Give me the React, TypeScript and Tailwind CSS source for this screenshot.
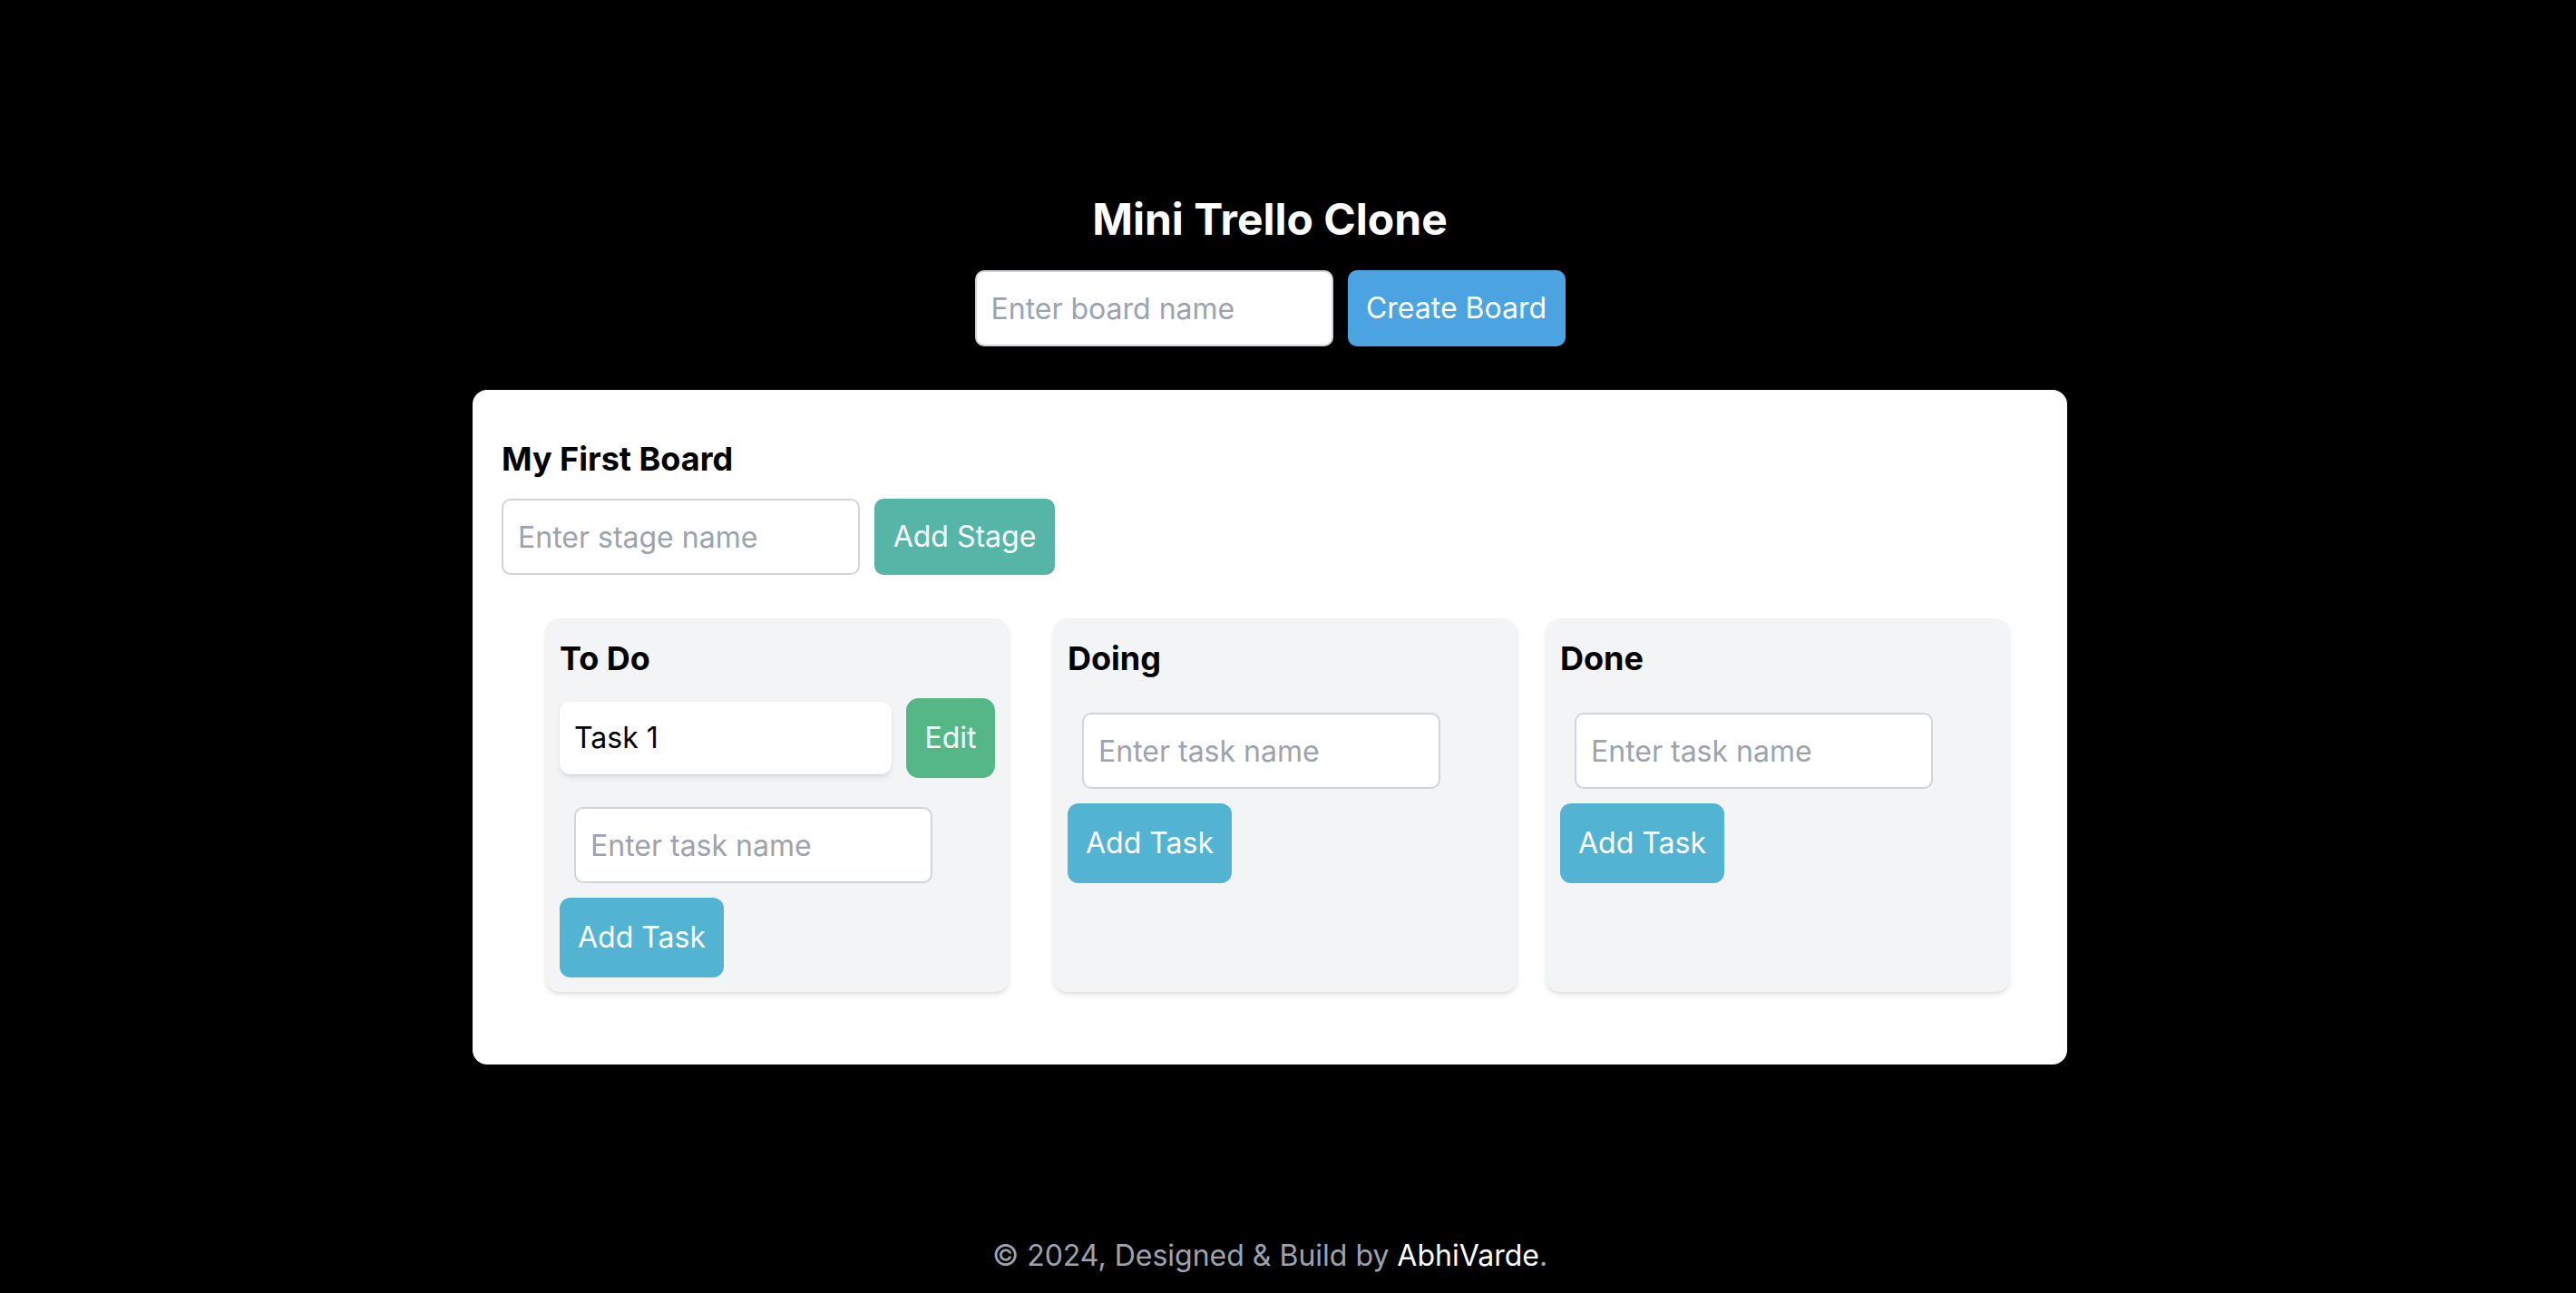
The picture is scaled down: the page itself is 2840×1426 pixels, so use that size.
import React from "react";

type Task = { id: number; name: string };
type Stage = { id: number; title: string; tasks: Task[]; gap: string };

const stages: Stage[] = [
  { id: 1, title: "To Do", tasks: [{ id: 1, name: "Task 1" }], gap: "mr-[48px]" },
  { id: 2, title: "Doing", tasks: [], gap: "mr-[31px]" },
  { id: 3, title: "Done", tasks: [], gap: "" },
];

function StageColumn({ stage }: { stage: Stage }) {
  return (
    <div className={`w-[512px] shrink-0 bg-[#f3f4f6] rounded-[16px] p-[16px] shadow-md flex flex-col items-start ${stage.gap}`}>
      <h3 className="text-[36px] leading-[56px] font-bold text-black mb-[16px]">{stage.title}</h3>
      {stage.tasks.map((task) => (
        <div key={task.id} className="w-full flex items-center gap-[16px] mb-[16px]">
          <div className="flex-1 bg-white rounded-[12px] shadow-md p-[16px] text-[32px] leading-[48px] text-black">
            {task.name}
          </div>
          <button className="w-[98px] h-[88px] bg-[#56b786] text-white text-[32px] rounded-[14px]">Edit</button>
        </div>
      ))}
      <input
        placeholder="Enter task name"
        className="m-[16px] w-[395px] h-[84px] px-[16px] text-[32px] bg-white border-2 border-[#d1d5db] rounded-[10px] placeholder:text-[#9ca3af] outline-none"
      />
      <button className="w-[181px] h-[88px] bg-[#53b3d3] text-white text-[32px] rounded-[12px]">Add Task</button>
    </div>
  );
}

export default function App() {
  return (
    <div className="min-h-screen bg-black flex flex-col font-['Inter',sans-serif]">
      <main className="w-[2800px] flex flex-col items-center pt-[210px]">
        <h1 className="text-[48px] leading-[64px] font-bold text-white">Mini Trello Clone</h1>
        <div className="flex mt-[24px] gap-[16px]">
          <input
            placeholder="Enter board name"
            className="w-[395px] h-[84px] px-[16px] text-[32px] bg-white border-2 border-[#d1d5db] rounded-[10px] placeholder:text-[#9ca3af] outline-none"
          />
          <button className="w-[240px] h-[84px] bg-[#4ba3e2] text-white text-[32px] rounded-[10px]">Create Board</button>
        </div>

        <div className="mt-[48px] w-[1758px] bg-white rounded-[16px] pt-[48px] px-[32px] pb-[32px]">
          <h2 className="text-[36px] leading-[56px] font-bold text-black mb-[16px]">My First Board</h2>
          <div className="flex gap-[16px]">
            <input
              placeholder="Enter stage name"
              className="w-[395px] h-[84px] px-[16px] text-[32px] bg-white border-2 border-[#d1d5db] rounded-[10px] placeholder:text-[#9ca3af] outline-none"
            />
            <button className="w-[199px] h-[84px] bg-[#55b5a6] text-white text-[32px] rounded-[10px]">Add Stage</button>
          </div>
          <div className="mt-[48px] mb-[48px] pl-[48px] flex items-stretch">
            {stages.map((s) => (
              <StageColumn key={s.id} stage={s} />
            ))}
          </div>
        </div>
      </main>
      <footer className="mt-auto w-[2800px] pb-[17px] text-center text-[32px] leading-[48px] text-[#9ca3af]">
        © 2024, Designed &amp; Build by <span className="text-white">AbhiVarde</span>.
      </footer>
    </div>
  );
}
